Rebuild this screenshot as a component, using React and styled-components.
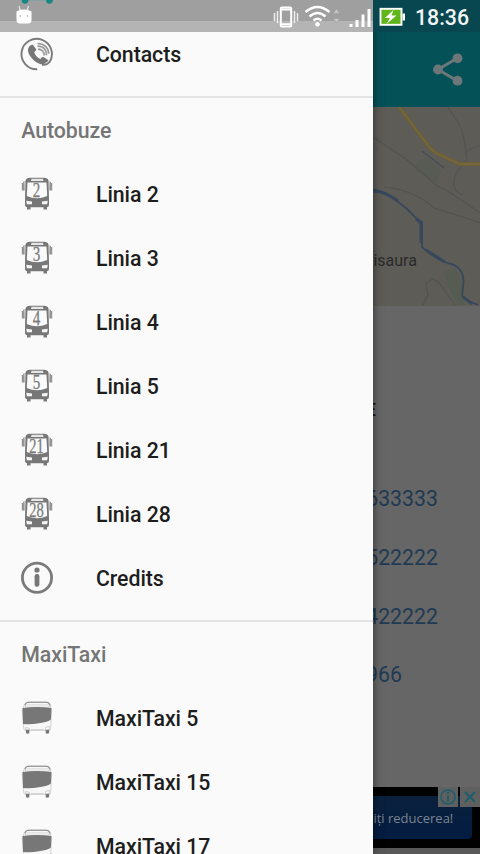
import React from 'react';

import styled, { createGlobalStyle } from 'styled-components';

const BUS_LINES = ['2', '3', '4', '5', '21', '28'];
const MAXI_LINES = ['5', '15', '17'];
const PHONES = ['0232633333', '0232522222', '0232422222', '0232966'];

const PhoneIcon = () => (
  <svg width='34' height='34' viewBox='0 0 34 34' fill='none'>
    <path d='M17.200 32.200A15.200 15.200 0 1 1 29.500 25.200Q26.500 28.500 22 27.500' stroke='#7b7b7b' strokeWidth='1.900' />
    <path
      d='M10 8.700c-3 2.400-2.600 6.700.8 11.200 3.600 4.600 8.300 7.800 13 7.200l4.200-2.800c.5-.5.3-1-.3-1.500l-4.200-2.700c-.7-.4-1.200-.1-1.800.5l-1.500 1.400c-2.800-1.200-5.200-4-6-7l1.700-1.400c.5-.5.5-1 .1-1.600l-3-4c-.6-.7-1.600-.3-3 .7z'
      fill='#777'
    />
    <path d='M18 12.200c4 0 6.300 2.600 6.200 6.300M17.500 9.200c6 0 9.200 3.600 9 9.100M17.500 6.500c7 0 11 4.500 11.200 10.200' stroke='#999' strokeWidth='1.700' />
  </svg>
);

const BusIcon = ({ line }) => (
  <svg width='32' height='34' viewBox='0 0 32 34'>
    <path d='M4.500 4Q4.500 1 9 .7h14Q27.500 1 27.500 4l.5 17v7q0 2-2 2.300V32.500h-3.500v-2.300h-13v2.300H6v-2.300Q4 30 4 28v-7z' fill='#777' />
    <path d='M10.500 1.800h11.500l.5 2.200H10z' fill='#e6e6e6' />
    <path d='M6.500 5.500h19l.7 13.500Q16 23.500 5.800 19z' fill='#fafafa' />
    <path d='M5.300 23.700l5.700.9v2.600H5.800zM26.700 23.700l-5.700.9v2.600h5.200z' fill='#f5f5f5' />
    <path d='M5 5H2.500v8M27 5h2.500v8' fill='none' stroke='#999' strokeWidth='1' />
    <path d='M.8 6h2.800v7.500H.8zM28.400 6h2.800v7.500h-2.800z' fill='#929292' />
    <text
      x='15.500'
      y='19.500'
      fill='#7b7b7b'
      stroke='#7b7b7b'
      strokeWidth='.3'
      fontFamily='"Liberation Serif", serif'
      fontSize='20'
      textAnchor='middle'
      textLength={line.length > 1 ? 14.5 : 7.5}
      lengthAdjust='spacingAndGlyphs'
    >
      {line}
    </text>
  </svg>
);

const InfoIcon = () => (
  <svg width='34' height='34' viewBox='0 0 34 34'>
    <circle cx='17' cy='16.700' r='14.600' fill='none' stroke='#7b7b7b' strokeWidth='2.800' />
    <circle cx='17' cy='9' r='2.600' fill='#777' />
    <rect x='14.600' y='13' width='4.800' height='12.700' rx='2.200' fill='#777' />
  </svg>
);

const MaxiIcon = () => (
  <svg width='32' height='34' viewBox='0 0 32 34'>
    <path d='M3.500 3Q5 1.200 8 1h17q3 .2 4 2l1.500 7-.8 18q0 1.500-1.700 1.500H5q-2 0-2.200-1.500L1.200 10z' fill='#f7f7f7' stroke='#ccc' strokeWidth='.8' />
    <path d='M4 4.500Q4.300 1.200 8 1.200h17q3.500 0 4 3.300' fill='none' stroke='#888' strokeWidth='1.100' />
    <path d='M4.500 4h23.800v2H4.500z' fill='#fff' stroke='#bbb' strokeWidth='.6' />
    <path d='M1.500 7q14-2 29 0l-.6 11.500Q27 21 18 22.300 9 24 2 23z' fill='#777' />
    <path d='M4.500 26.700l4 .5v2H5zM28.500 25.500l-4 .8v3h3.500z' fill='#fff' stroke='#bbb' strokeWidth='.7' />
    <path d='M10 28.500h13' stroke='#ccc' strokeWidth='.8' />
    <path d='M4.800 28.700h3.500V32.300q-1.500.8-3.300 0zM24.700 28.700h3.500l-.2 3.600q-1.500.8-3.300 0z' fill='#777' />
  </svg>
);

const ShareIcon = () => (
  <svg width='30' height='33' viewBox='0 0 30 33'>
    <path d='M24.500 5L5 16.500 24.500 28' fill='none' stroke='#6c7779' strokeWidth='3' />
    <circle cx='24.500' cy='5.300' r='4.900' fill='#6c7779' />
    <circle cx='5' cy='16.500' r='4.900' fill='#6c7779' />
    <circle cx='24.500' cy='27.700' r='4.900' fill='#6c7779' />
  </svg>
);

const MapDrawing = () => (
  <svg width='107' height='200' viewBox='0 0 107 200' fill='none'>
    <path d='M44 54l10-3 14 13-4 12-22-14z' fill='#585b54' />
    <path d='M71 165l11-4 8 15 2 22h-8l-9-18z' fill='#575c53' />
    <path d='M0 30l33 22 30 26 18 10 26 18M11 80c22 2 38 10 50 21 16 5 30 9 46 15M50 198l5-10-2-12 7-4 6 4 16 22' stroke='#53534f' strokeWidth='1.200' />
    <path d='M75 0c5 9 13 17 15 27s3 18 4 25c-5 8-14 13-13 25 0 7 5 9 9 11M92 48c4-8 9-8 15-9' stroke='#525552' strokeWidth='1.200' />
    <path d='M26 0l31 41 6 5 24 11h20' stroke='#6b5e3c' strokeWidth='4' />
    <path d='M26 0l31 41 6 5 24 11h20' stroke='#766739' strokeWidth='1.800' />
    <path d='M0 83c14 1 24 11 34 19l9 9 6 4v25c10 9 16 13 25 16 14 2 18 12 16 24l-1 9 7 5 9 4' stroke='#38485c' strokeWidth='1.800' />
    <path d='M1 84q10 0 24 10M43 112l5 4v20M53 143l19 12M90 190l9 7' stroke='#38485c' strokeWidth='2.800' />
    <path d='M49 44l22 17' stroke='#454d58' strokeWidth='1.500' />
  </svg>
);

const StatusIcons = () => (
  <svg width='136' height='25' viewBox='0 0 136 25' fill='none'>
    <path d='M1.500 8v8M4.500 6v12M21.500 6v12M24.500 8v8' stroke='#eee' strokeWidth='1.500' />
    <rect x='7.800' y='2.500' width='10.400' height='19' rx='1' stroke='#fff' strokeWidth='2' />
    <path d='M8 4.500h10M8 19.200h10' stroke='#fff' strokeWidth='1.800' />
    <path d='M32.500 7q12-10 24 0M36.500 11.500q8-7 16 0M40.500 15.500q4-3.500 8 0' stroke='#fff' strokeWidth='2.400' />
    <circle cx='44.500' cy='19.300' r='2.300' fill='#fff' />
    <path d='M60 8.500h7L63.500 4zM60 13.500h7l-3.500 4.500z' fill='#c4c4c4' stroke='#999' strokeWidth='.5' />
    <path d='M76.500 19h3v3h-3zM82.500 15h3v7h-3zM88.500 9.500h3V22h-3zM94.500 4h3v18h-3z' fill='#fff' />
    <rect x='107.500' y='3.800' width='21' height='16' fill='#60b51a' stroke='#fff' strokeWidth='1.900' />
    <path d='M129.500 8.500h2.500v7h-2.500z' fill='#fff' />
    <path d='M120.500 5l-8.500 8h5l-3.500 6 10-8.500h-5z' fill='#fff' />
  </svg>
);

const AndroidHead = () => (
  <svg width='18' height='20' viewBox='0 0 18 20'>
    <path d='M4 1l1.500 5M13.500 1L12 6' stroke='#e4e4e4' strokeWidth='1.200' />
    <path d='M1.500 6.500Q5 4 9 4.500q3.500-.5 7.500 2V15q0 3.500-3.500 3.500H5Q1.500 18.500 1.500 15z' fill='#fff' />
    <circle cx='5.200' cy='11' r='.8' fill='#aaa' />
    <circle cx='12.500' cy='11' r='.8' fill='#aaa' />
  </svg>
);

const LogoEdge = () => (
  <svg width='34' height='5' viewBox='0 0 34 5'>
    <path d='M4 0h26' stroke='#70a09f' strokeWidth='1' />
    <circle cx='5' cy='.3' r='3.400' fill='#188784' />
    <circle cx='29.500' cy='.3' r='3.400' fill='#188784' />
  </svg>
);

const AdChoices = () => (
  <svg width='42' height='20' viewBox='0 0 42 20' fill='none'>
    <path d='M0 0h20v20H0zM22 0h20v20H22z' fill='#606060' />
    <circle cx='10' cy='10' r='7' stroke='#195e6b' strokeWidth='1.500' />
    <path d='M10 8.500V15M10 5v2M27 5l10 10M37 5L27 15' stroke='#195e6b' strokeWidth='1.900' />
  </svg>
);

const MenuItem = ({ icon, label }) => (
  <Row>
    <IconSlot>{icon}</IconSlot>
    <span>{label}</span>
  </Row>
);

const App = () => {
  return (
    <Screen>
      <GlobalStyle />
      <Drawer>
        <MenuItem icon={<PhoneIcon />} label='Contacts' />
        <Divider />
        <SectionHeader>Autobuze</SectionHeader>
        {BUS_LINES.map((line) => (
          <MenuItem key={line} icon={<BusIcon line={line} />} label={`Linia ${line}`} />
        ))}
        <MenuItem icon={<InfoIcon />} label='Credits' />
        <Divider />
        <SectionHeader>MaxiTaxi</SectionHeader>
        {MAXI_LINES.map((line) => (
          <MenuItem key={line} icon={<MaxiIcon />} label={`MaxiTaxi ${line}`} />
        ))}
      </Drawer>
      <Page>
        <Toolbar>
          <ShareIcon />
        </Toolbar>
        <MapArea>
          <MapDrawing />
          <MapLabel>isaura</MapLabel>
        </MapArea>
        <Contacts>
          <PageTitle>TELEFOANE</PageTitle>
          {PHONES.map((phone) => (
            <Phone key={phone} $short={phone.length < 10}>{phone}</Phone>
          ))}
        </Contacts>
        <Ad>
          <AdButton>iți reducerea!</AdButton>
          <AdBadge>
            <AdChoices />
          </AdBadge>
        </Ad>
      </Page>
      <StatusBar>
        <LogoSlot>
          <LogoEdge />
        </LogoSlot>
        <AndroidHead />
        <StatusRight>
          <StatusIcons />
          <Clock>18:36</Clock>
        </StatusRight>
      </StatusBar>
    </Screen>
  );
};

const GlobalStyle = createGlobalStyle`
  * {
    box-sizing: border-box;
  }

  body {
    margin: 0;
    font-family: Roboto, sans-serif;
  }

  svg {
    display: block;
    flex-shrink: 0;
  }
`;

const Screen = styled.div`
  position: relative;
  display: flex;
  width: 480px;
  height: 854px;
  overflow: hidden;
`;

const Drawer = styled.nav`
  position: relative;
  z-index: 1;
  display: flex;
  flex-direction: column;
  flex: 0 0 373.4px;
  padding-top: 22px;
  background: #fafafa;
  box-shadow: 0 0 9px rgba(0, 0, 0, 0.5);
`;

const Row = styled.div`
  display: flex;
  flex: 0 0 64px;
  align-items: center;
  padding-left: 21px;
  color: #1d1d1d;
  font-size: 21.3px;
  font-weight: 500;
  letter-spacing: -0.06px;
  line-height: 25px;
  white-space: nowrap;
`;

const IconSlot = styled.div`
  display: flex;
  justify-content: center;
  width: 32px;
  margin-right: 43px;
`;

const Divider = styled.div`
  flex: 0 0 2px;
  margin-top: 10px;
  background: #e4e4e4;
`;

const SectionHeader = styled.div`
  display: flex;
  flex: 0 0 64px;
  align-items: center;
  padding-left: 21.3px;
  color: #757575;
  font-size: 21.3px;
  font-weight: 500;
  letter-spacing: -0.06px;
  line-height: 25px;
`;

const Page = styled.main`
  display: flex;
  flex: 1;
  flex-direction: column;
  min-width: 0;
  background: #666;
`;

const Toolbar = styled.header`
  display: flex;
  flex: 0 0 107px;
  align-items: center;
  justify-content: flex-end;
  padding: 32px 17px 0 0;
  background: #055158;
`;

const MapArea = styled.section`
  position: relative;
  flex: 0 0 199px;
  overflow: hidden;
  background: #5d5c57;
`;

const MapLabel = styled.span`
  position: absolute;
  top: 144px;
  left: 0;
  color: #2b2b2b;
  font-size: 16px;
  line-height: 20px;
`;

const Contacts = styled.section`
  display: flex;
  flex: 1;
  flex-direction: column;
  align-items: flex-end;
  padding-top: 89px;
  overflow: hidden;
`;

const PageTitle = styled.h2`
  margin: 0 104px 58px 0;
  color: #171717;
  font-size: 19px;
  font-weight: 500;
  line-height: 30px;
`;

const Phone = styled.span`
  flex: 0 0 58.8px;
  margin-right: ${({ $short }) => ($short ? '78px' : '42px')};
  color: #203a54;
  font-size: 21.3px;
  line-height: 32px;
`;

const Ad = styled.aside`
  position: relative;
  flex: 0 0 67px;
  height: 67px;
  padding: 9px 8px 9px 0;
  border-bottom: 6px solid #595959;
  background: #020202;
`;

const AdButton = styled.div`
  height: 43px;
  border-radius: 0 4px 4px 0;
  background: linear-gradient(#0a213d, #031c42);
  color: #7b858f;
  font-family: 'Open Sans', sans-serif;
  font-size: 13px;
  line-height: 45px;
  white-space: nowrap;
`;

const AdBadge = styled.div`
  position: absolute;
  top: 0;
  right: 0;
`;

const StatusBar = styled.div`
  position: absolute;
  z-index: 2;
  inset: 0 0 auto;
  display: flex;
  justify-content: space-between;
  height: 32px;
  padding: 5px 11px 0 15px;
  background:
    linear-gradient(#9f9f9f 21px, #b4b4b4 21px) 0 0 / 373.4px 32px no-repeat,
    linear-gradient(#084650, #084650) 373px 0 no-repeat;
`;

const LogoSlot = styled.div`
  position: absolute;
  top: 0;
  left: 20px;
`;

const StatusRight = styled.div`
  display: flex;
`;

const Clock = styled.span`
  margin-left: 6px;
  color: #f3f5f5;
  font-size: 21.3px;
  font-weight: 500;
  line-height: 25px;
`;

export default App;
